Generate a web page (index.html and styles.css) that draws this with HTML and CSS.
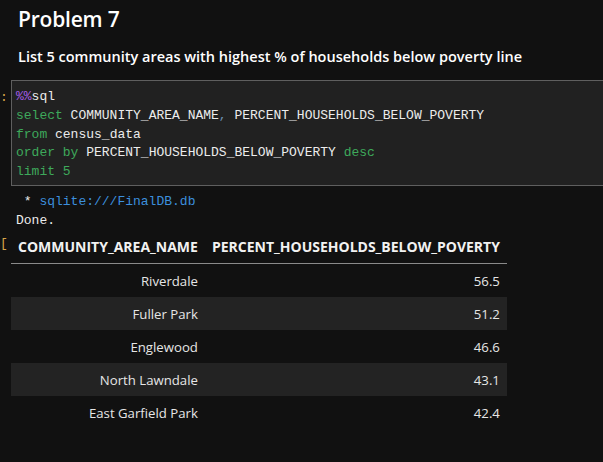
FILE: index.html
```html
<!DOCTYPE html>
<html>
<head>
<meta charset="utf-8">
<link rel="stylesheet" href="styles.css">
</head>
<body>
<div class="page">
  <div class="md">
    <h1 class="title">Problem 7</h1>
    <p class="lead">List 5 community areas with highest % of households below poverty line</p>
  </div>
  <div class="cell">
    <span class="prompt">:</span>
    <pre class="code"><span class="mg">%%</span>sql
<span class="kw">select</span> COMMUNITY_AREA_NAME<span class="pn">,</span> PERCENT_HOUSEHOLDS_BELOW_POVERTY
<span class="kw">from</span> census_data
<span class="kw">order by</span> PERCENT_HOUSEHOLDS_BELOW_POVERTY <span class="kw">desc</span>
<span class="kw">limit</span> <span class="kw">5</span></pre>
  </div>
  <div class="out">
    <pre class="stream"> * <span class="link">sqlite:///FinalDB.db</span>
Done.</pre>
    <div class="result">
      <span class="prompt2">[</span>
      <table class="df">
        <thead>
          <tr><th>COMMUNITY_AREA_NAME</th><th>PERCENT_HOUSEHOLDS_BELOW_POVERTY</th></tr>
        </thead>
        <tbody>
          <tr><td>Riverdale</td><td>56.5</td></tr>
          <tr><td>Fuller Park</td><td>51.2</td></tr>
          <tr><td>Englewood</td><td>46.6</td></tr>
          <tr><td>North Lawndale</td><td>43.1</td></tr>
          <tr><td>East Garfield Park</td><td>42.4</td></tr>
        </tbody>
      </table>
    </div>
  </div>
</div>
</body>
</html>
```

FILE: styles.css
```css
html, body {
  margin: 0;
  padding: 0;
  background: #111111;
  overflow: hidden;
}
.page {
  width: 603px;
  height: 462px;
  font-family: "Open Sans", "Noto Sans", sans-serif;
  color: #e6e6e6;
}
.md {
  padding: 4px 0 0 18px;
}
.title {
  margin: 0;
  font-size: 21px;
  font-weight: 600;
  line-height: 30px;
  color: #ffffff;
  letter-spacing: -0.2px;
}
.lead {
  margin: 13px 0 0 0;
  font-size: 14.5px;
  font-weight: 600;
  line-height: 20px;
  color: #ffffff;
}
.cell {
  position: relative;
  margin: 13px 0 0 11px;
  border: 1px solid #5f5f5f;
  border-right: none;
  background: #212121;
  padding: 7px 0 3px 4px;
}
.prompt {
  position: absolute;
  left: -12px;
  top: 8px;
  color: #d7a64a;
  font-family: "Liberation Mono", monospace;
  font-size: 13px;
  line-height: 18.75px;
}
.code, .stream {
  margin: 0;
  font-family: "Liberation Mono", monospace;
  font-size: 13px;
  line-height: 18.75px;
  color: #ececec;
}
.mg { color: #a35ce6; }
.kw { color: #3ea95b; }
.pn { color: #6b8fb0; }
.out {
  padding: 7px 0 0 16px;
}
.link { color: #3c8fdd; }
.result {
  position: relative;
  margin: 0 0 0 -5px;
}
.prompt2 {
  position: absolute;
  left: -11px;
  top: 6px;
  color: #d7a64a;
  font-family: "Liberation Mono", monospace;
  font-size: 13px;
}
.df {
  border-collapse: collapse;
  font-size: 13.2px;
  color: #e6e6e6;
}
.df th {
  font-size: 14px;
  font-weight: 700;
  text-align: left;
  padding: 6px 7px 7px 7px;
  height: 20px;
  border-bottom: 1px solid #8a8a8a;
  color: #f2f2f2;
}
.df td {
  text-align: right;
  padding: 0 7px;
  height: 33px;
  line-height: 20px;
}
.df tbody tr:nth-child(even) td {
  background: #232323;
}
```
